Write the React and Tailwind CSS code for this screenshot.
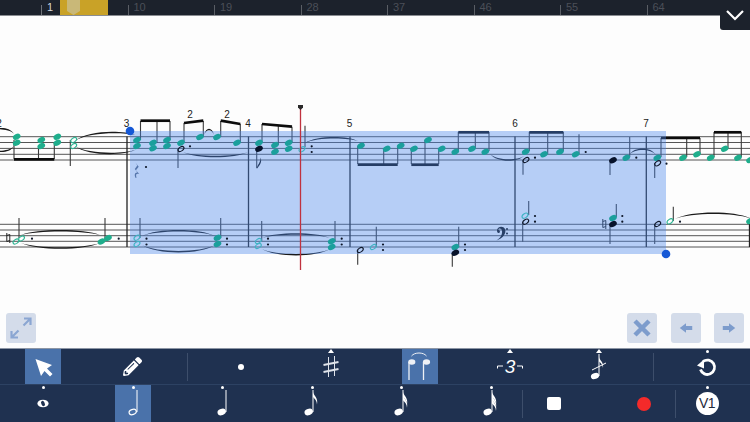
import { FaPencilAlt } from 'react-icons/fa'

// score data, in page coordinates
const heads = [
  [16.7, 136.7], [16.7, 142.7], [41.3, 140], [41.3, 146], [57.3, 136.7], [57.3, 142.7],
  [137, 140], [137, 146], [153, 142.7], [153, 148.3], [167, 140], [167, 146],
  [181, 142.7], [200, 137], [217, 137], [237, 142.7],
  [259, 142.7], [275, 145], [275, 151.7], [288.7, 142.7], [288.7, 148.7],
  [361, 145.7], [386.7, 148.7], [400.7, 145.7], [414, 148.7], [428, 140], [441.7, 148.7],
  [455.3, 151.7], [472, 148.7], [485.3, 151.7],
  [525.7, 151.7], [544, 154.3], [560, 151.7], [575.7, 154.3], [626.3, 157.7], [657.3, 157.7],
  [683, 157.7], [697, 154.3], [710.7, 157.7], [724.7, 148.7], [738, 157.7], [750, 160],
  [101.5, 241.5], [108, 238], [217.5, 237.7], [217.5, 244], [331.7, 241.3], [331.7, 247],
  [455.3, 247], [613, 218], [750, 221],
]
const hollowHeads = [
  [73.7, 140], [73.7, 146], [16, 241.5], [21.5, 238.5], [137, 237.7], [137, 244],
  [302, 149.3], [258.3, 241], [258.3, 246], [373.3, 247], [525, 215.7], [670, 221.3],
]
const blackHeads = [[259, 148.7], [455.3, 252.7], [613, 160.3], [613, 224]]
const blackHollow = [[181, 149], [360.3, 250], [526, 160], [657.7, 163.3], [525.7, 221.7], [657.7, 224]]
const stems = [
  [14, 140, 159], [38.5, 146, 159], [54.3, 143, 159], [70.3, 140, 166],
  [140.5, 121, 140], [157, 121, 143], [170, 121, 140], [184, 123, 142], [203.3, 121, 137],
  [220.7, 121, 137], [240.3, 124, 142], [178, 149, 168],
  [19, 218, 238], [105, 218, 240], [140, 218, 238], [220.7, 218, 238],
  [262, 124, 142], [256.7, 149, 168], [278.3, 125, 145], [292, 126.7, 143], [305, 125.7, 147],
  [357.7, 146, 164], [383.7, 149, 164], [397.7, 146, 164], [411.3, 149, 164], [425, 140, 164],
  [438.7, 149, 164], [458.3, 132, 151], [475.3, 132, 148], [489, 132, 151],
  [261.7, 221, 241], [335, 221, 241], [357.7, 250, 264.7], [376.3, 226.7, 247], [458.7, 226.7, 247],
  [452.3, 253, 266.7],
  [529.3, 132, 151], [547.7, 132, 154], [563.3, 132, 151], [579, 134.3, 154], [523, 160, 174.7],
  [610, 160, 175], [629.7, 137, 157], [661, 138, 157], [654.7, 163, 178], [686.7, 138, 157],
  [700, 138, 154], [714, 132, 157], [728, 132, 148], [741.3, 132, 157],
  [528.7, 201, 215], [522.7, 222, 241.7], [616.3, 204, 217], [610, 224, 244], [654.7, 224, 244],
  [673.3, 206.7, 221],
]
const beams = [
  [14, 159.3, 54.3, 159.3], [140.5, 120.7, 170, 120.7], [184, 123, 203.3, 120.7], [220.7, 120.7, 240.3, 124],
  [262, 124, 292, 126.7], [357.7, 164.7, 397.7, 164.7], [411.3, 164.7, 438.7, 164.7], [458.3, 132.3, 489, 132.3],
  [529.3, 132.3, 563.3, 132.3], [661, 138, 700, 138], [714, 132.3, 741.3, 132.3],
]
const dots = [
  [190, 146.3], [146, 167], [32, 238.7], [118.7, 238.7], [146.5, 238.7], [146.5, 244.5], [227, 238.7], [227, 244.5],
  [311.7, 146.3], [311.7, 152], [268, 238.7], [268, 244.5], [341.7, 238.7], [341.7, 244.5],
  [383, 244.5], [383, 250], [465, 244.5], [465, 250], [585.7, 152], [535, 157.7], [636.3, 157.7], [666.5, 163.7],
  [535, 216], [535, 221.7], [622.3, 216], [622.3, 221.7], [680, 221.7],
]
const ties = [
  [-4, 129, 14, 134, 129], [-4, 151, 14, 146, 151], [75, 141, 135, 135, 132.7], [75, 146, 135, 150, 153.3],
  [183, 152, 248, 152, 156.5], [204, 135, 214, 135, 129.5],
  [21, 243, 100, 243, 248], [21, 235, 100, 235, 230.7], [142, 236, 215, 236, 230.7], [142, 245, 215, 245, 251.7],
  [262, 238, 330, 238, 234], [262, 249, 330, 249, 254.7], [305, 143, 358, 141, 137.7],
  [490, 154, 524, 156, 160], [629, 155, 656, 155, 149.3], [675, 219, 752, 219, 213.3],
]
const barlines = [[127, 136.5, 247], [248.5, 136.5, 247], [350, 136.5, 247], [515, 136.5, 247], [646.3, 136.5, 247], [749.5, 224, 247]]
const staffY = [136.7, 142.5, 148.4, 154.3, 160, 224.3, 230, 235.7, 241.3, 247]
const measures = [['2', -1, 127], ['3', 126.5, 127], ['4', 248, 127], ['5', 349.5, 127], ['6', 515, 127], ['7', 646, 127]]
const ticks = ['10', '19', '28', '37', '46', '55', '64']

const noteColor = x => (x < 130 || x > 666 ? '#1fae8c' : '#1b9f9c')

function tiePath([x1, y1, x2, y2, peak]) {
  const w = x2 - x1
  const c = (peak - 0.25 * (y1 + y2) / 2) / 0.75
  const d = peak < (y1 + y2) / 2 ? -1 : 1
  return `M${x1} ${y1}C${x1 + w * 0.2} ${c + d} ${x2 - w * 0.2} ${c + d} ${x2} ${y2}C${x2 - w * 0.2} ${c - d} ${x1 + w * 0.2} ${c - d} ${x1} ${y1}Z`
}

function Score() {
  return (
    <svg viewBox="0 16 750 297" className="block w-[750px] h-[297px]">
      {staffY.map(y => <line key={y} x1="0" x2="750" y1={y} y2={y} stroke="#555" strokeWidth="1" />)}
      {barlines.map(([x, a, b]) => <line key={x} x1={x} x2={x} y1={a} y2={b} stroke="#222" strokeWidth="1.3" />)}
      {stems.map(([x, a, b], i) => <line key={i} x1={x} x2={x} y1={a} y2={b} stroke="#3a3a3a" strokeWidth="1.1" />)}
      {beams.map(([a, b, c, d], i) => <line key={i} x1={a} x2={c} y1={b} y2={d} stroke="#0c0c0c" strokeWidth="2.7" />)}
      {ties.map((t, i) => <path key={i} d={tiePath(t)} fill="#1a1a1a" />)}
      {/* flag on the black note in bar 4 */}
      <path d="M256.7 169c0.500-4.500 4-6 3.800-11.500 1.800 4.500-0.300 7.200-3.800 11.500z" fill="#111" />
      {/* quaver rest */}
      <path d="M135.500 162.500l3.200 4.200-2.800 3.600 3.400 3.800c-2.400-0.700-4-0.200-2.800 3.600l-0.700 0.400c-1.900-3-1-6 1.600-5.700l-2.600-3.300 2.500-3.700z" fill="#5d6a80" />
      {/* naturals */}
      <path d="M6.800 233v8.500l3-1M9.800 243v-8.500l-3 1" fill="none" stroke="#222" strokeWidth="1" />
      <path d="M602.800 219v8.500l3-1M605.800 229v-8.500l-3 1" fill="none" stroke="#222" strokeWidth="1" />
      {/* bass clef */}
      <path d="M497 230.500c0-4 6-5.500 8-1.500 1.800 4.500-2.500 9.500-8.500 11.500 3.800-2.300 6-6 5.500-9.800-0.500-2.700-3.500-2.700-3.700-0.700 1.500-0.500 2.500 2.500 0.500 3-1.200 0.300-1.800-1-1.800-2.500z" fill="#111" />
      <circle cx="507" cy="229" r="1" fill="#111" />
      <circle cx="507" cy="233.500" r="1" fill="#111" />
      {/* selection */}
      <rect x="130" y="131" width="536" height="123" fill="#4b87eb" fillOpacity="0.4" />
      {heads.map(([x, y], i) => (
        <ellipse key={i} cx={x} cy={y} rx="4" ry="2.800" transform={`rotate(-25 ${x} ${y})`} fill={noteColor(x)} />
      ))}
      {hollowHeads.map(([x, y], i) => (
        <ellipse key={i} cx={x} cy={y} rx="3.300" ry="2" transform={`rotate(-35 ${x} ${y})`} fill="none" stroke={x > 130 && x < 666 ? '#3fb3c4' : '#2fb594'} strokeWidth="1.100" />
      ))}
      {blackHeads.map(([x, y], i) => (
        <ellipse key={i} cx={x} cy={y} rx="4" ry="2.800" transform={`rotate(-25 ${x} ${y})`} fill="#08132b" />
      ))}
      {blackHollow.map(([x, y], i) => (
        <ellipse key={i} cx={x} cy={y} rx="3.300" ry="2" transform={`rotate(-35 ${x} ${y})`} fill="none" stroke="#10192c" strokeWidth="1.100" />
      ))}
      {dots.map(([x, y], i) => <circle key={i} cx={x} cy={y} r="1.100" fill="#0b1426" />)}
      {/* playhead */}
      <line x1="300.500" x2="300.500" y1="106" y2="270" stroke="#c0323f" strokeWidth="1.300" />
      <path d="M298 105h5v2.500l-2.500 2.500-2.500-2.500z" fill="#2a2a2a" />
      {measures.map(([n, x, y]) => (
        <text key={n} x={x} y={y} fontSize="10" textAnchor="middle" fill="#222" fontFamily="Liberation Sans">{n}</text>
      ))}
      <text x="190" y="118" fontSize="10" textAnchor="middle" fill="#222" fontFamily="Liberation Sans">2</text>
      <text x="227" y="118" fontSize="10" textAnchor="middle" fill="#222" fontFamily="Liberation Sans">2</text>
      <circle cx="130" cy="131" r="4.300" fill="#1558d6" />
      <circle cx="666" cy="254" r="4.300" fill="#1558d6" />
    </svg>
  )
}

function Timeline() {
  return (
    <div className="relative h-[16px] shrink-0 bg-[#1c222c] border-b border-[#8a8d92] flex pl-[41px] overflow-visible">
      <div className="w-[86.5px] h-full flex items-end">
        <span className="w-px h-[10px] bg-[#6e7278]" />
        <span className="ml-[5px] text-[11px] leading-[15px] text-[#d5d7da] self-start">1</span>
      </div>
      {ticks.map(t => (
        <div key={t} className="w-[86.5px] h-full flex items-end">
          <span className="w-px h-[10px] bg-[#5a5e65]" />
          <span className="ml-[5px] text-[11px] leading-[15px] text-[#4b4f58] self-start">{t}</span>
        </div>
      ))}
      <div className="absolute left-[60px] top-0 w-[48px] h-[15px] bg-[#c9a227]">
        <svg width="13" height="15" viewBox="0 0 13 15" className="ml-[7px]">
          <path d="M0 0h13v11l-6.500 4-6.500-4z" fill="#c9b878" />
        </svg>
      </div>
      <div className="absolute right-0 top-0 w-[30px] h-[30px] bg-[#1c222c] rounded-bl-[3px] flex items-center justify-center">
        <svg width="20" height="13" viewBox="0 0 20 13">
          <path d="M2 2l8 8 8-8" fill="none" stroke="#fff" strokeWidth="2.200" />
        </svg>
      </div>
    </div>
  )
}

function SoftButton({ children }) {
  return <div className="w-[30px] h-[30px] rounded-[3px] bg-[#d4dcea] flex items-center justify-center">{children}</div>
}

function ToolButton({ active, mark, children }) {
  return (
    <div className={`relative w-9 h-full shrink-0 flex items-center justify-center ${active ? 'bg-[#4a72aa]' : ''}`}>
      {mark === 'dot' && <span className="absolute left-1/2 -ml-px top-[0.5px] w-[3px] h-[3px] rounded-full bg-white" />}
      {mark === 'tri' && <span className="absolute left-1/2 -ml-[3px] top-0 w-0 h-0 border-x-[3px] border-x-transparent border-b-[4px] border-b-white" />}
      {children}
    </div>
  )
}

function Sep({ wide }) {
  return <div className={`w-px h-[28px] self-center bg-[#3d4e6b] shrink-0 ${wide ? 'ml-[36px] mr-[35px]' : 'ml-[13px] mr-[13px]'}`} />
}

// flag count 0 = quarter, head hollow for the half note
function NoteIcon({ stemX = 22, flags = 0, hollow }) {
  const hx = stemX - 4.3
  return (
    <svg width="36" height="37" viewBox="0 0 36 37">
      <line x1={stemX} x2={stemX} y1="5" y2="27" stroke="#fff" strokeWidth="1" />
      {hollow
        ? <ellipse cx={hx} cy="27" rx="3.700" ry="2.500" transform={`rotate(-20 ${hx} 27)`} fill="none" stroke="#fff" strokeWidth="1.200" />
        : <ellipse cx={hx} cy="27" rx="4.300" ry="3.100" transform={`rotate(-20 ${hx} 27)`} fill="#fff" />}
      {Array.from({ length: flags }).map((_, i) => (
        <path key={i} d={`M${stemX} ${7 + i * 3.2}c0.500 3.800 5.500 5.500 4 12.500-0.100-3.500-2.200-5.800-4-7.500z`} fill="#fff" />
      ))}
    </svg>
  )
}

export default function App() {
  return (
    <div className="w-[750px] h-[422px] flex flex-col bg-[#fdfdfd] overflow-hidden font-['Liberation_Sans',sans-serif]">
      <Timeline />
      <div className="flex-1 flex flex-col">
        <Score />
        <div className="flex items-start pl-[6px] pr-[6px]">
          <SoftButton>
            <svg width="24" height="24" viewBox="0 0 24 24" fill="none" stroke="#8ba6d2" strokeWidth="2.200">
              <path d="M14.500 9.500L21 3M15 2.500h6.500V9M9.500 14.500L3 21M2.500 15v6.500H9" />
            </svg>
          </SoftButton>
          <div className="ml-auto flex gap-[13.500px]">
            <SoftButton>
              <svg width="20" height="20" viewBox="0 0 20 20" fill="none" stroke="#7d9ccc" strokeWidth="4.500">
                <path d="M3 3l14 14M17 3L3 17" />
              </svg>
            </SoftButton>
            <SoftButton>
              <svg width="14" height="12" viewBox="0 0 18 14"><path d="M1 7l8-6v3.500h8v5H9V13z" fill="#7d9ccc" /></svg>
            </SoftButton>
            <SoftButton>
              <svg width="14" height="12" viewBox="0 0 18 14"><path d="M17 7l-8-6v3.500H1v5h8V13z" fill="#7d9ccc" /></svg>
            </SoftButton>
          </div>
        </div>
      </div>

      <div className="h-[74px] shrink-0 bg-[#1f3150] border-t border-[#8d96a5] flex flex-col text-white">
        <div className="h-[36px] flex px-[25px] border-b border-[#2d4263]">
          <ToolButton active>
            <svg width="36" height="36" viewBox="0 0 36 36">
              <path d="M10.500 10L27 16l-5 3.500 5.500 5.500-2.500 2.500-5.500-5.500-3.500 5z" fill="#fff" />
            </svg>
          </ToolButton>
          <div className="w-[54px]" />
          <ToolButton><FaPencilAlt size={19} /></ToolButton>
          <Sep wide />
          <ToolButton><span className="w-[6px] h-[6px] rounded-full bg-white" /></ToolButton>
          <div className="w-[54px]" />
          <ToolButton mark="tri">
            <svg width="18" height="22" viewBox="0 0 18 22" fill="none" stroke="#dfe3ea">
              <path d="M6.500 1v20M12.500 0v20" strokeWidth="1" />
              <path d="M1.500 9l15-3M1.500 16l15-3" strokeWidth="1.800" />
            </svg>
          </ToolButton>
          <div className="w-[54px]" />
          <ToolButton active>
            <svg width="36" height="36" viewBox="0 0 36 36" fill="none" stroke="#eef1f6">
              <path d="M9.500 7c3-4 12-4 15 0" strokeWidth="1" />
              <line x1="7" x2="7" y1="13" y2="31" strokeWidth="1.300" />
              <line x1="21.500" x2="21.500" y1="13" y2="31" strokeWidth="1.300" />
              <ellipse cx="9.800" cy="13" rx="3.600" ry="2.700" fill="#eef1f6" stroke="none" />
              <ellipse cx="24.500" cy="13" rx="3.600" ry="2.700" fill="#eef1f6" stroke="none" />
            </svg>
          </ToolButton>
          <div className="w-[54px]" />
          <ToolButton mark="tri">
            <svg width="30" height="24" viewBox="0 0 30 24" fill="none" stroke="#fff" strokeWidth="1">
              <path d="M2.500 13.500V11h5.500M22 11h5.500v2.500" />
              <text x="15" y="18" fontSize="19" fontStyle="italic" textAnchor="middle" fill="#fff" stroke="none" fontFamily="Liberation Sans">3</text>
            </svg>
          </ToolButton>
          <div className="w-[53px]" />
          <ToolButton mark="tri">
            <svg width="36" height="36" viewBox="0 0 36 36">
              <line x1="18" x2="18" y1="5" y2="27" stroke="#fff" strokeWidth="1" />
              <ellipse cx="14" cy="27" rx="4.200" ry="3" transform="rotate(-20 14 27)" fill="#fff" />
              <path d="M18 8c0.500 3.500 5 5 4 11-0.200-3-2-5-4-6.500z" fill="#fff" />
              <line x1="11" x2="25" y1="21" y2="14" stroke="#fff" strokeWidth="1" />
            </svg>
          </ToolButton>
          <Sep wide />
          <ToolButton mark="dot">
            <svg width="26" height="26" viewBox="0 0 26 26" fill="none">
              <path d="M9 7.500a7.200 7.200 0 1 1-2.500 8" stroke="#fff" strokeWidth="2.800" />
              <path d="M3 11.500l7-6v9z" fill="#fff" />
            </svg>
          </ToolButton>
        </div>
        <div className="flex-1 flex px-[25px]">
          <ToolButton mark="dot">
            <svg width="12" height="9" viewBox="0 0 14 10">
              <ellipse cx="7" cy="5" rx="6.500" ry="4.500" fill="#fff" />
              <ellipse cx="7" cy="5" rx="2" ry="3.200" transform="rotate(-25 7 5)" fill="#1f3150" />
            </svg>
          </ToolButton>
          <div className="w-[54px]" />
          <ToolButton active mark="dot"><NoteIcon hollow stemX={22} /></ToolButton>
          <div className="w-[53px]" />
          <ToolButton mark="dot"><NoteIcon stemX={22} /></ToolButton>
          <div className="w-[54px]" />
          <ToolButton mark="dot"><NoteIcon stemX={19} flags={1} /></ToolButton>
          <div className="w-[53px]" />
          <ToolButton mark="dot"><NoteIcon stemX={20} flags={2} /></ToolButton>
          <div className="w-[54px]" />
          <ToolButton mark="dot"><NoteIcon stemX={19} flags={3} /></ToolButton>
          <Sep />
          <ToolButton><span className="w-[14px] h-[13px] rounded-[2px] bg-white" /></ToolButton>
          <div className="w-[54px]" />
          <ToolButton><span className="w-[14px] h-[14px] rounded-full bg-[#f42a2a]" /></ToolButton>
          <Sep />
          <ToolButton mark="dot">
            <span className="w-[23px] h-[23px] rounded-full bg-white text-[#1f2a3c] text-[14px] leading-[23px] text-center tracking-[-0.5px]">V1</span>
          </ToolButton>
        </div>
      </div>
    </div>
  )
}
